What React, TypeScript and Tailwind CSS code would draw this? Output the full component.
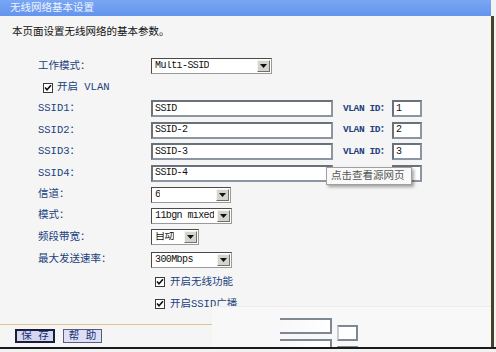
import React from "react";

const FONT = "font-['Liberation_Mono','Noto_Sans_CJK_SC',monospace]";

function Check() {
  return (
    <div className="w-[10px] h-[10px] bg-white border border-[#3a3a3a] flex items-center justify-center">
      <svg width="8" height="8" viewBox="0 0 8 8">
        <path d="M1 3.5 L3 5.8 L7 1.2" stroke="#111" strokeWidth="1.6" fill="none" />
      </svg>
    </div>
  );
}

function Select({ w, text }: { w: string; text: string }) {
  return (
    <div className={`${w} h-[16px] bg-white border border-[#4a4a4a] border-r-[#9a9a9a] border-b-[#9a9a9a] flex items-center justify-between pl-[3px] pr-[1px]`}>
      <span className="text-[10px] leading-none text-[#111] tracking-[-0.6px] whitespace-nowrap overflow-hidden">{text}</span>
      <div className="w-[13px] h-[12px] bg-[#d6d3cc] border border-[#f4f4f4] border-r-[#707070] border-b-[#707070] flex items-center justify-center shrink-0">
        <svg width="7" height="4" viewBox="0 0 7 4">
          <path d="M0 0 L7 0 L3.5 4 Z" fill="#111" />
        </svg>
      </div>
    </div>
  );
}

function Input({ w, text }: { w: string; text: string }) {
  return (
    <div className={`${w} h-[17px] bg-white border-2 border-[#8c96a3] border-t-[#6a717b] border-l-[#6a717b] flex items-center pl-[2px]`}>
      <span className="text-[10px] leading-none text-[#111] tracking-[-0.6px] whitespace-nowrap">{text}</span>
    </div>
  );
}

function Label({ children }: { children: React.ReactNode }) {
  return <div className="w-[151px] pl-[38px] text-[10.5px] leading-none text-[#213f7d] whitespace-nowrap">{children}</div>;
}

function SsidRow({ h, n, val, vid, hidden }: { h: string; n: number; val: string; vid: string; hidden?: boolean }) {
  return (
    <div className={`flex items-center ${h}`}>
      <Label>SSID{n}：</Label>
      <Input w="w-[182px]" text={val} />
      <div className="ml-[10px] w-[49px] text-[9.5px] font-bold leading-none text-[#213f7d] whitespace-nowrap tracking-[-0.4px]">
        {hidden ? "" : "VLAN ID："}
      </div>
      <Input w="w-[30px]" text={vid} />
    </div>
  );
}

export default function App() {
  return (
    <div className={`relative w-[496px] h-[352px] overflow-hidden bg-[#f2f2f2] ${FONT}`}>
      <div className="flex h-[347px]">
        <div className="w-[491px] flex flex-col bg-[#f5f5f5]">
          <div className="h-[16px] bg-gradient-to-b from-[#79a7f4] to-[#6394ec] flex items-center pl-[10px]">
            <span className="text-[10.5px] leading-none text-[#eef3ff]">无线网络基本设置</span>
          </div>
          <div className="h-[39px] pt-[11px] pl-[12px] text-[10.5px] leading-none text-[#111]">本页面设置无线网络的基本参数。</div>

          <div className="flex items-center h-[22px]">
            <Label>工作模式：</Label>
            <Select w="w-[121px]" text="Multi-SSID" />
          </div>
          <div className="flex items-center h-[21px] pl-[43px]">
            <Check />
            <span className="ml-[4px] text-[10.5px] leading-none text-[#213f7d]">开启 VLAN</span>
          </div>
          <SsidRow h="h-[21px]" n={1} val="SSID" vid="1" />
          <SsidRow h="h-[22px]" n={2} val="SSID-2" vid="2" />
          <SsidRow h="h-[21px]" n={3} val="SSID-3" vid="3" />
          <SsidRow h="h-[22px]" n={4} val="SSID-4" vid="" hidden />
          <div className="flex items-center h-[21px]">
            <Label>信道：</Label>
            <Select w="w-[80px]" text="6" />
          </div>
          <div className="flex items-center h-[21px]">
            <Label>模式：</Label>
            <Select w="w-[81px]" text="11bgn mixed" />
          </div>
          <div className="flex items-center h-[22px]">
            <Label>频段带宽：</Label>
            <Select w="w-[48px]" text="自动" />
          </div>
          <div className="flex items-center h-[23px]">
            <Label>最大发送速率：</Label>
            <Select w="w-[81px]" text="300Mbps" />
          </div>
          <div className="flex items-center h-[22px] pl-[155px]">
            <Check />
            <span className="ml-[5px] text-[10.5px] leading-none text-[#213f7d]">开启无线功能</span>
          </div>
          <div className="flex items-center h-[22px] pl-[155px]">
            <Check />
            <span className="ml-[5px] text-[10.5px] leading-none text-[#213f7d]">开启SSID广播</span>
          </div>
          <div className="mt-[9px] h-[1px] bg-[#dcc48c]" />
          <div className="mt-[4px] flex items-center pl-[15px] gap-[8px]">
            <div className="w-[40px] h-[14px] bg-[#d3d7f2] border-2 border-[#1c1c3a] flex items-center justify-center text-[10.5px] leading-none text-[#1c2f6a]">保 存</div>
            <div className="w-[39px] h-[14px] bg-[#dcdff5] border border-[#5a5a80] flex items-center justify-center text-[10.5px] leading-none text-[#1c2f6a]">帮 助</div>
          </div>
        </div>
        <div className="w-[3px] flex flex-col">
          <div className="h-[16px] bg-[#f2f2f2]" />
          <div className="flex-1 bg-[#4a4228]" />
        </div>
      </div>
      <div className="h-[2px] bg-[#1a1a1a]" />

      {/* tooltip */}
      <div className="absolute left-[326px] top-[167px] w-[86px] h-[18px] bg-[#f9f9f9] border border-[#a0a0a0] shadow-[2px_2px_3px_rgba(0,0,0,0.35)] flex items-center pl-[4px]">
        <span className="text-[10.5px] leading-none text-[#555]">点击查看源网页</span>
      </div>

      {/* pasted patch at bottom right */}
      <div className="absolute left-[212px] top-[306px] w-[279px] h-[41px] bg-[#f8f8f8] border-t border-[#ececec] overflow-hidden">
        <div className="absolute left-[68px] top-[11px] w-[52px] h-[16px] border-2 border-l-0 border-[#7e8893] bg-gradient-to-r from-[#f8f8f8] to-white" />
        <div className="absolute left-[68px] top-[32px] w-[52px] h-[16px] border-2 border-l-0 border-[#7e8893] bg-gradient-to-r from-[#f8f8f8] to-white" />
        <div className="absolute left-[125px] top-[18px] w-[21px] h-[16px] border-2 border-[#7e8893] border-l-[#c8ccd2] bg-white" />
        <div className="absolute left-[125px] top-[39px] w-[21px] h-[16px] border-2 border-[#7e8893] border-l-[#c8ccd2] bg-white" />
      </div>
    </div>
  );
}
